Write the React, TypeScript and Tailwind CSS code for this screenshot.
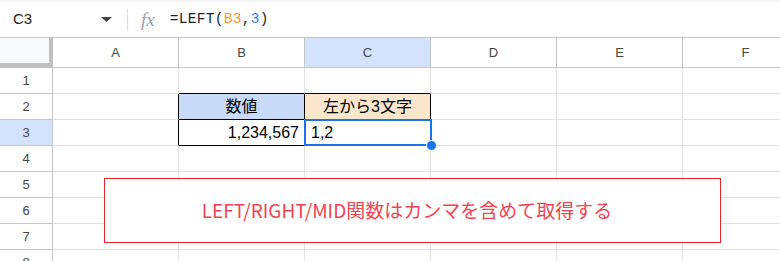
import React from "react";

const COLS = ["A", "B", "C", "D", "E", "F"];
const ROWS = [1, 2, 3, 4, 5, 6, 7, 8];

// cell contents keyed by address
const cellText: Record<string, { text: string; align: string; bg?: string }> = {
  B2: { text: "数値", align: "justify-center", bg: "bg-[#c9daf8]" },
  C2: { text: "左から3文字", align: "justify-center", bg: "bg-[#fce5cd]" },
  B3: { text: "1,234,567", align: "justify-end pr-[5px]" },
  C3: { text: "1,2", align: "justify-start pl-[6px]" },
};

const blackRight = ["A2", "A3", "B2", "B3", "C2", "C3"];
const blackBottom = ["B1", "C1", "B2", "B3", "C2", "C3"];

function Cell({ addr }: { addr: string }) {
  const data = cellText[addr];
  const r = blackRight.includes(addr) ? "border-r-black" : "border-r-[#e1e1e1]";
  const b = blackBottom.includes(addr) ? "border-b-black" : "border-b-[#e1e1e1]";
  return (
    <div
      className={`relative h-[26px] border-r border-b ${r} ${b} flex items-center text-[16px] text-black ${
        data?.bg ?? "bg-white"
      } ${data?.align ?? ""} ${addr === "C3" ? "z-10" : ""}`}
    >
      {data && <span className="leading-none whitespace-nowrap">{data.text}</span>}
      {addr === "C3" && (
        <>
          <div className="absolute -left-[1px] -top-[1px] w-[128px] h-[27px] border-2 border-[#1a73e8]" />
          <div className="absolute left-[121px] top-[20px] w-[11px] h-[11px] rounded-full bg-[#1a73e8] border border-white" />
        </>
      )}
    </div>
  );
}

export default function App() {
  return (
    <div className="relative w-[780px] h-[261px] overflow-hidden bg-white font-['Liberation_Sans','Noto_Sans_CJK_JP',sans-serif]">
      {/* Formula bar */}
      <div className="h-[37px] flex items-center border-t-2 border-[#f5f5f5] text-[#1f1f1f]">
        <span className="ml-[13px] w-[84px] text-[15px]">C3</span>
        <svg width="11" height="5" viewBox="0 0 11 5" className="ml-[4px]">
          <polygon points="0,0 11,0 5.5,5" fill="#444746" />
        </svg>
        <div className="ml-[15px] w-px h-[21px] bg-[#dadce0]" />
        <span className="ml-[13px] text-[19px] italic text-[#a0a0a0] font-['Liberation_Serif',serif] leading-none">
          fx
        </span>
        <span className="ml-[15px] text-[14.5px] font-['Liberation_Mono',monospace] tracking-[0.3px]">
          =LEFT(<span className="text-[#f29b2a]">B3</span>,<span className="text-[#3b78e7]">3</span>)
        </span>
      </div>

      {/* Grid */}
      <div className="grid grid-cols-[53px_repeat(6,126px)] text-[#444746]">
        {/* header row */}
        <div className="h-[31px] border-t border-t-[#c4c7c5] bg-[#f8f9fa] border-r-[4px] border-b-[5px] border-r-[#c0c0c0] border-b-[#c0c0c0]" />
        {COLS.map((c) => (
          <div
            key={c}
            className={`h-[31px] border-t border-b border-r border-[#c4c7c5] flex items-center justify-center text-[13px] ${
              c === "C" ? "bg-[#d3e3fd]" : "bg-white"
            }`}
          >
            {c}
          </div>
        ))}

        {ROWS.map((r) => (
          <React.Fragment key={r}>
            <div
              className={`h-[26px] border-r border-b border-[#c4c7c5] flex items-center justify-center text-[13px] ${
                r === 3 ? "bg-[#d3e3fd]" : "bg-white"
              }`}
            >
              {r}
            </div>
            {COLS.map((c) => (
              <Cell key={c + r} addr={c + r} />
            ))}
          </React.Fragment>
        ))}
      </div>

      {/* Text box drawn over the sheet */}
      <div className="absolute z-20 left-[104px] top-[178px] w-[617px] h-[65px] border border-[#e3262d] bg-white flex items-center justify-center">
        <span className="text-[19px] text-[#ee4452] font-['Noto_Sans_CJK_JP',sans-serif] whitespace-nowrap -ml-[11px]">
          LEFT/RIGHT/MID関数はカンマを含めて取得する
        </span>
      </div>
    </div>
  );
}
